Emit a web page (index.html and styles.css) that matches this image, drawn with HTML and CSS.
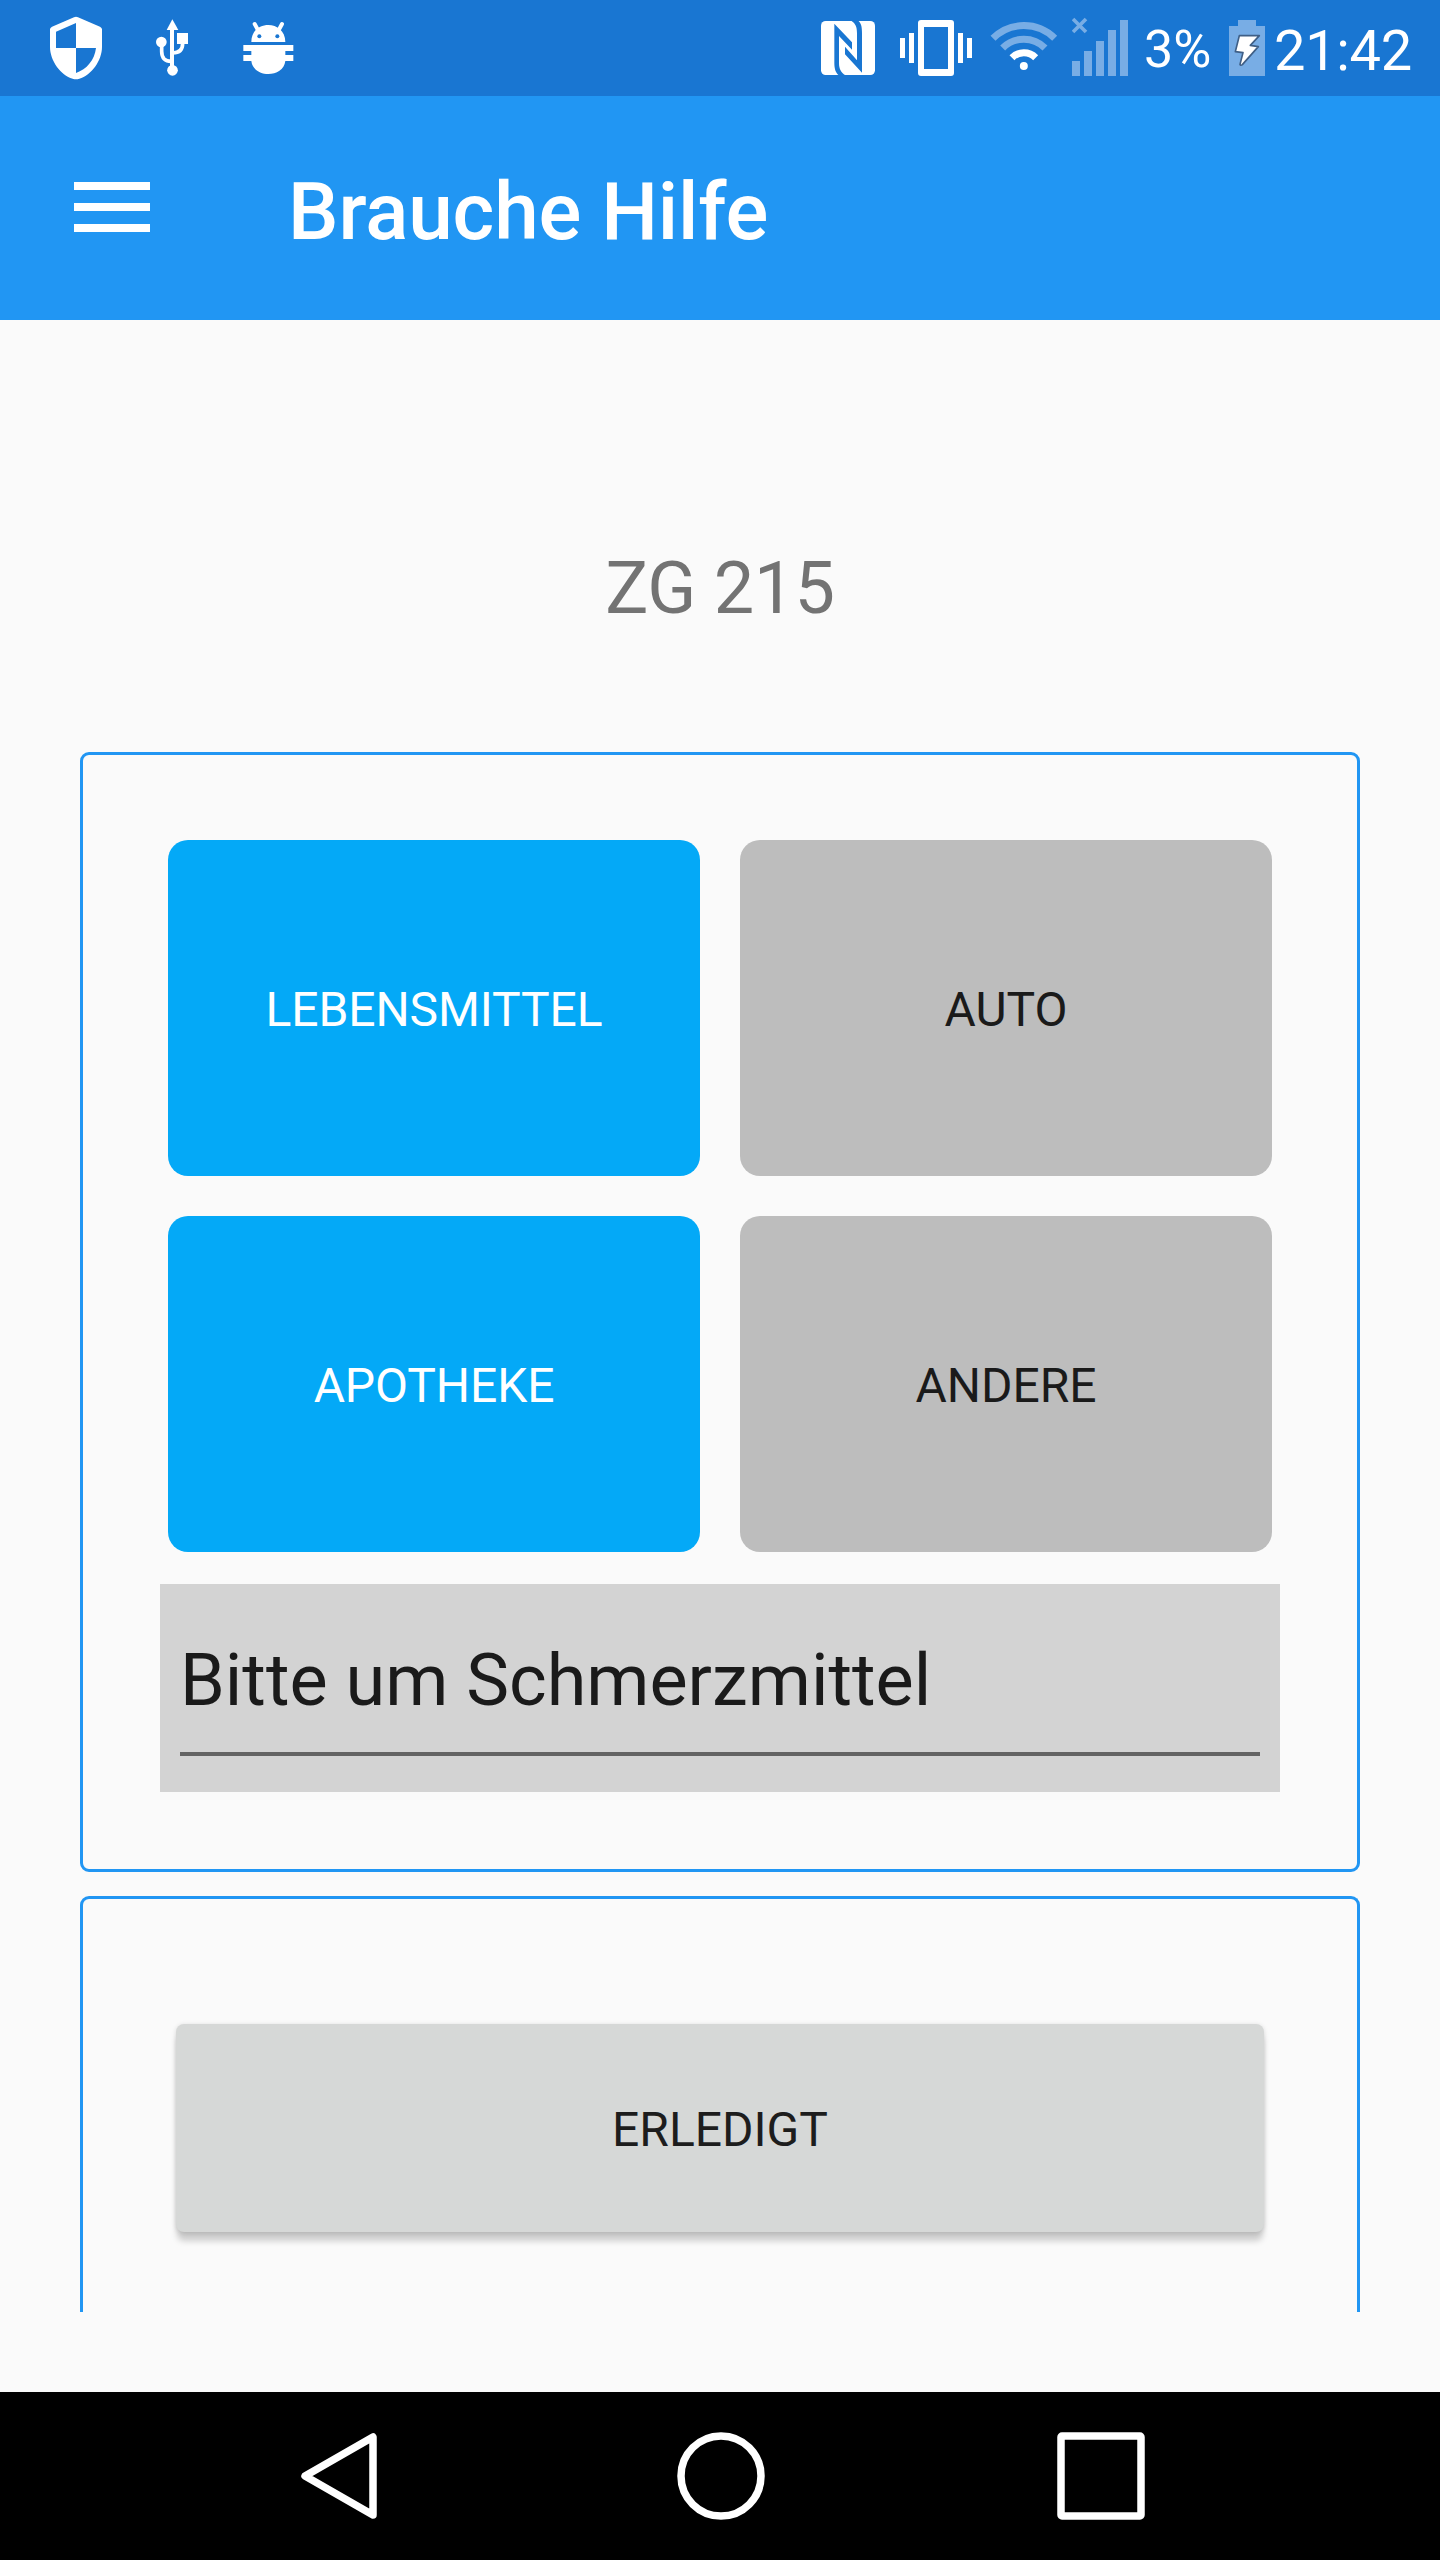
FILE: index.html
```html
<!DOCTYPE html>
<html lang="de">
<head>
<meta charset="utf-8">
<title>Brauche Hilfe</title>
<link rel="stylesheet" href="styles.css">
</head>
<body>
<div class="screen">
  <div class="status">
    <div class="notifications">
      <svg width="52" height="96" viewBox="150 0 156 288">
        <path fill="#fff" d="M222 52q6-3 12 0l66 28q6 3 6 8v52c0 42-32 85-68 96q-10 3-20 0c-36-11-68-54-68-96V88q0-5 6-8z"/>
        <path fill="#1976d2" d="M228 69v75h-60V95zM228 144h60c-4 36-28 64-60 75z"/>
      </svg>
      <svg width="33" height="96" viewBox="468 0 99 288">
        <g fill="#fff"><path d="M517 58l18 32h-35z"/><circle cx="484" cy="126" r="16"/><path d="M531 99h33v33h-33z"/><circle cx="517.500" cy="211" r="16"/></g>
        <g fill="none" stroke="#fff" stroke-width="12"><path d="M516 85v120"/><path stroke-width="11" d="M485 130v24q0 31 30 30M548 130c0 20-12 29-30 29"/></g>
      </svg>
      <svg width="51" height="96" viewBox="728 0 153 288">
        <path fill="none" stroke="#fff" stroke-width="12" stroke-linecap="round" d="M763 72l12 22M845 72l-12 22"/>
        <path fill="#fff" d="M753 126c0-68 102-68 102 0zM729 135h150v18h-24v12h24v18h-24c-6 52-96 52-102 0h-24v-18h24v-12h-24z"/>
        <circle cx="777" cy="109" r="6" fill="#1976d2"/><circle cx="831" cy="109" r="6" fill="#1976d2"/>
      </svg>
    </div>
    <div class="system">
      <svg width="54" height="96" viewBox="63 0 162 288">
        <rect x="63" y="63" width="162" height="162" rx="14" fill="#fff"/>
        <path fill="#1976d2" d="M103 71v118c0 18 4 29 13 37h20c-13-9-19-19-19-37v-81l39 41v-22z"/>
        <path fill="#1976d2" d="M186 218V99c0-20-3-30-11-37h-21c13 9 17 19 17 37v82l-36-41v23z"/>
      </svg>
      <svg class="vibrate" width="72" height="96" viewBox="300 0 216 288">
        <path fill="#fff" fill-rule="evenodd" d="M300 114h15v60h-15zM327 99h15v90h-15zM474 99h15v90h-15zM501 114h15v60h-15zM363 60h90q9 0 9 9v150q0 9-9 9h-90q-9 0-9-9V69q0-9 9-9zM372 81v126h72V81z"/>
      </svg>
      <svg class="wifi" width="68" height="96" viewBox="572 0 204 288">
        <g fill="none" stroke-width="21"><path stroke="#78ade5" d="M581 115a131 131 0 0 1 185 0M610 144a90 90 0 0 1 127 0"/><path stroke="#fff" d="M638 173a50 50 0 0 1 71 0"/></g>
        <circle cx="673.500" cy="198" r="12" fill="#fff"/>
      </svg>
      <svg class="signal" width="56" height="96" viewBox="816 0 168 288">
        <path fill="none" stroke="#78ade5" stroke-width="11" d="M819 57l39 39M858 57l-39 39"/>
        <path fill="#78ade5" d="M816 183h24v45h-24zM852 153h24v75h-24zM888 123h24v105h-24zM924 90h24v138h-24zM960 60h24v168h-24z"/>
      </svg>
      <span class="percent">3%</span>
      <svg class="battery" width="36" height="96" viewBox="387 0 108 288">
        <path fill="#78ade5" d="M414 60h54v18h27v150H387V78h27z"/>
        <path fill="#fff" stroke="#3f5f86" stroke-width="5" stroke-linejoin="round" d="M418 107h60l-27 29 24 4-48 54q-5 4-7-1l9-35-23-3z"/>
      </svg>
      <span class="clock">21:42</span>
    </div>
  </div>

  <header class="appbar">
    <div class="menu"><i></i><i></i><i></i></div>
    <h1 class="title">Brauche Hilfe</h1>
  </header>

  <main class="content">
    <div class="room">ZG 215</div>
    <section class="card">
      <div class="choices">
        <button class="choice selected">LEBENSMITTEL</button>
        <button class="choice">AUTO</button>
        <button class="choice selected">APOTHEKE</button>
        <button class="choice">ANDERE</button>
      </div>
      <div class="note"><div class="note-line">Bitte um Schmerzmittel</div></div>
    </section>
    <section class="card card-cut">
      <button class="done">ERLEDIGT</button>
    </section>
  </main>

  <nav class="navbar">
    <svg width="88" height="88" viewBox="0 0 88 88"><path d="M77 5v78L9 44z"/></svg>
    <svg width="88" height="88" viewBox="0 0 88 88"><circle cx="44" cy="44" r="40"/></svg>
    <svg width="88" height="88" viewBox="0 0 88 88"><rect x="4" y="4" width="80" height="80" rx="1"/></svg>
  </nav>
</div>
</body>
</html>
```
FILE: styles.css
```css
* { box-sizing: border-box; }
body { margin: 0; font-family: Roboto, sans-serif; }
svg { display: block; flex: none; }
button { border: 0; padding: 0; font: inherit; }

.screen {
  width: 1440px;
  height: 2560px;
  display: flex;
  flex-direction: column;
  background: #fafafa;
  overflow: hidden;
}

.status {
  height: 96px;
  flex: none;
  display: flex;
  justify-content: space-between;
  padding: 0 28px 0 50px;
  background: #1976d2;
  color: #fff;
}
.notifications { display: flex; gap: 54px; }
.system { display: flex; align-items: center; white-space: nowrap; }
.vibrate { margin-left: 25px; }
.wifi { margin-left: 18px; }
.signal { margin-left: 14px; }
.percent { width: 66px; margin-left: 16px; font-size: 52px; line-height: 96px; padding-top: 4px; }
.battery { margin-left: 19px; }
.clock { width: 138px; margin-left: 9px; font-size: 56px; line-height: 96px; padding-top: 5px; letter-spacing: -0.3px; }

.appbar {
  height: 224px;
  flex: none;
  display: flex;
  align-items: center;
  padding-left: 74px;
  background: #2196f3;
  color: #fff;
}
.menu { width: 76px; display: grid; gap: 13px; margin-bottom: 2px; }
.menu i { height: 8px; background: #fff; }
.title { margin: 7px 0 0 138px; font-size: 80px; font-weight: 500; line-height: 94px; letter-spacing: -0.1px; }

.content { height: 1992px; flex: none; padding: 0 80px; overflow: hidden; }
.room {
  height: 432px;
  padding-top: 227px;
  font-size: 72px;
  line-height: 84px;
  letter-spacing: -0.2px;
  text-align: center;
  color: #737373;
}
.card {
  height: 1120px;
  padding: 85px 77px;
  border: 3px solid #2196f3;
  border-radius: 9px;
}
.choices {
  display: grid;
  grid-template-columns: 1fr 1fr;
  grid-auto-rows: 336px;
  gap: 40px;
  padding: 0 8px;
}
.choice {
  padding-top: 2px;
  border-radius: 20px;
  background: #bdbdbd;
  color: #1a1a1a;
  font-size: 48px;
}
.selected { background: #04a9f7; color: #fff; letter-spacing: -0.1px; }
.note { height: 208px; margin-top: 32px; padding: 0 20px; background: #d3d3d3; }
.note-line {
  height: 172px;
  padding-top: 55px;
  border-bottom: 4px solid #636363;
  font-size: 72px;
  line-height: 84px;
  color: #1a1a1a;
}
.card-cut {
  height: 416px;
  margin-top: 24px;
  padding: 125px 93px 0;
  border-bottom: 0;
  border-radius: 9px 9px 0 0;
}
.done {
  display: block;
  width: 100%;
  height: 208px;
  padding-top: 2px;
  border-radius: 8px;
  background: #d6d8d7;
  box-shadow: 0 10px 6px -1px rgba(0, 0, 0, .18), 0 1px 5px rgba(0, 0, 0, .14);
  color: #1d1d1d;
  font-size: 48px;
}

.navbar {
  height: 168px;
  margin-top: auto;
  flex: none;
  display: flex;
  justify-content: space-between;
  align-items: center;
  padding: 0 295px 0 296px;
  background: #000;
}
.navbar svg { fill: none; stroke: #fff; stroke-width: 7.500px; stroke-linejoin: round; }
```
